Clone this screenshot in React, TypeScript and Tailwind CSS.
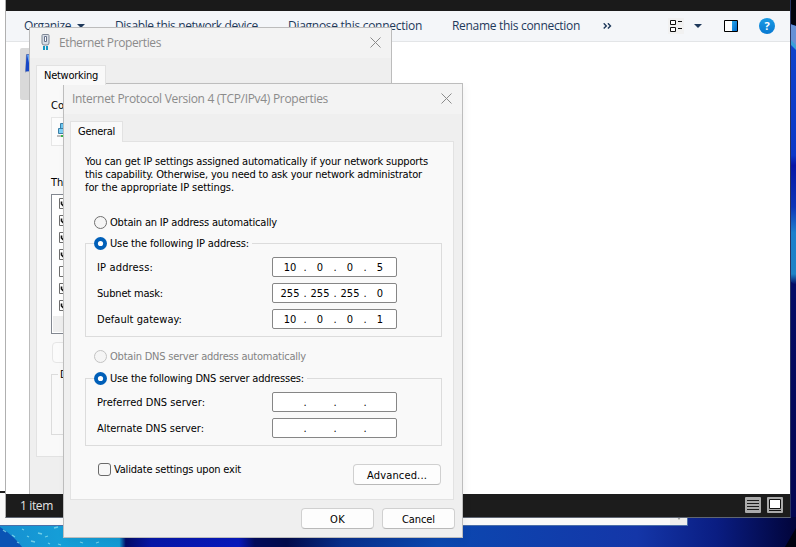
import { useLayoutEffect, useRef } from "react";
import type { ReactNode } from "react";

const tahoma = "font-['DejaVu_Sans_Condensed','DejaVu_Sans',sans-serif] font-stretch-condensed text-[11px] leading-[13px]";
const segoe = "font-['Open_Sans','Noto_Sans',sans-serif] font-stretch-normal text-[12px] leading-[16px]";

/* Text spaced out evenly so that its line has the given width. */
function Fit({ w, children, className = "" }: { w: number; children: string; className?: string }) {
  const ref = useRef<HTMLSpanElement>(null);
  useLayoutEffect(() => {
    const el = ref.current;
    if (!el) return;
    el.style.letterSpacing = "0px";
    const natural = el.getBoundingClientRect().width;
    el.style.letterSpacing = `${(w - natural) / children.length}px`;
  }, [w, children]);
  return (
    <span ref={ref} className={`inline-block shrink-0 whitespace-pre ${className}`}>
      {children}
    </span>
  );
}

function Radio({ checked = false, disabled = false }: { checked?: boolean; disabled?: boolean }) {
  return (
    <svg width="13" height="13" viewBox="0 0 13 13" className="shrink-0 overflow-visible">
      {checked ? (
        <>
          <circle cx="6.5" cy="6.5" r="6.5" fill="#005fb8" />
          <circle cx="6.5" cy="6.5" r="2.6" fill="#fff" />
        </>
      ) : (
        <circle cx="6.5" cy="6.5" r="6" fill="#f5f5f5" stroke={disabled ? "#c3c3c3" : "#707070"} />
      )}
    </svg>
  );
}

function RadioRow({ text, w, checked, disabled }: { text: string; w: number; checked?: boolean; disabled?: boolean }) {
  return (
    <div className={`flex h-[13px] items-center gap-[3px] ${disabled ? "text-[#838383]" : ""}`}>
      <Radio checked={checked} disabled={disabled} />
      <Fit w={w}>{text}</Fit>
    </div>
  );
}

function AddressField({ parts }: { parts: string[] }) {
  return (
    <div className="flex h-5 w-[125px] items-center rounded-[2px] border border-[#868686] bg-white pl-1">
      {parts.map((p, i) => (
        <div key={i} className="flex">
          <span className="w-[26px] text-center">{p}</span>
          {i < 3 && <span className="flex w-1 justify-center">.</span>}
        </div>
      ))}
    </div>
  );
}

function AddressRow({ label, w, parts }: { label: string; w: number; parts: string[] }) {
  return (
    <div className="flex h-5 items-center pl-[11px]">
      <div className="w-[175px]">
        <Fit w={w}>{label}</Fit>
      </div>
      <AddressField parts={parts} />
    </div>
  );
}

function Group({ text, w, className, children }: { text: string; w: number; className: string; children: ReactNode }) {
  return (
    <fieldset className={`w-[357px] border border-[#dcdcdc] ${className}`}>
      <legend className="ml-2 pr-[3px]">
        <RadioRow text={text} w={w} checked />
      </legend>
      <div className="flex flex-col gap-1.5 pt-[7px]">{children}</div>
    </fieldset>
  );
}

function PushButton({ text, w, className }: { text: string; w: number; className: string }) {
  return (
    <button className={`flex h-[21px] items-center justify-center rounded-[4px] border border-[#d0d0d0] border-b-[#b9b9b9] bg-[#fdfdfd] pt-[2px] ${className}`}>
      <Fit w={w}>{text}</Fit>
    </button>
  );
}

function Close() {
  return (
    <svg width="11" height="11" viewBox="0 0 11 11" className="mb-px shrink-0">
      <path d="M.5.5l10 10M10.500.5l-10 10" stroke="#8b8b8b" />
    </svg>
  );
}

function Wallpaper() {
  return (
    <svg width="796" height="547" className="absolute left-0 top-0">
      <defs>
        <linearGradient id="floor">
          <stop offset="0" stopColor="#168fd0" />
          <stop offset=".08" stopColor="#159fd8" />
          <stop offset=".15" stopColor="#129ad4" />
          <stop offset=".158" stopColor="#030b68" />
          <stop offset=".19" stopColor="#0717a8" />
          <stop offset=".3" stopColor="#0819bd" />
          <stop offset=".32" stopColor="#030c5c" />
          <stop offset=".36" stopColor="#030c4c" />
          <stop offset=".43" stopColor="#082f8c" />
          <stop offset=".55" stopColor="#0b48b0" />
          <stop offset=".8" stopColor="#1436a8" />
          <stop offset=".9" stopColor="#0a1d82" />
          <stop offset="1" stopColor="#01043a" />
        </linearGradient>
        <linearGradient id="side" x1="0" y1="0" x2="0" y2="1">
          <stop offset="0" stopColor="#1148cc" />
          <stop offset=".3" stopColor="#0b38c8" />
          <stop offset=".32" stopColor="#0716a6" />
          <stop offset=".4" stopColor="#0c35b8" />
          <stop offset=".45" stopColor="#1d7fcc" />
          <stop offset=".53" stopColor="#1c83c6" />
          <stop offset=".55" stopColor="#040c66" />
          <stop offset="1" stopColor="#020650" />
        </linearGradient>
      </defs>
      <rect width="796" height="547" fill="url(#floor)" />
      <rect x="790" width="6" height="517" fill="url(#side)" />
      <path d="M790 0h6v26l-6-2z" fill="#01030c" />
      <path d="M790 24l6 2v20l-6-6z" fill="#6590d6" />
      <path d="M790 39l6 6v5l-6-6z" fill="#3aa0d8" />
      <path d="M790 281l6 5v12h-6z" fill="#040c66" />
      <path d="M0 527q14 9 22 20H0z" fill="#0a53b4" />
      <path d="M796 528v19h-11z" fill="#00010f" />
      <g stroke="#8fe0ee" strokeWidth="1.3" opacity=".75">
        <path d="M3 530l3 2M12 535l3 2M22 529l2 1M31 541l4 1M38 533l4 1M45 537l3-1M54 528l4-1M58 544l3 1M27 536l2 1M17 542l2 1M48 543l2 1M80 542l3 1M96 543l3-1" />
      </g>
    </svg>
  );
}

function ExplorerWindow() {
  return (
    <div className="absolute left-[5px] top-0 flex h-[518px] w-[786px] flex-col border-b border-l border-r border-b-[#5f6673] border-l-[#b0b0b0] border-r-[#2a3560] bg-white text-[#1e395b]">
      <div className="h-[11px] bg-[#1a1a1a]" />
      <div className={`flex h-[31px] items-center border-b border-[#e3e5e7] bg-[#f4f6f9] pl-[18px] ${segoe}`}>
        <Fit w={47}>Organize</Fit>
        <svg width="8" height="4" className="ml-[6px]"><path d="M0 0h8L4 4z" fill="#1e395b" /></svg>
        <Fit w={143} className="ml-[30px]">Disable this network device</Fit>
        <Fit w={134} className="ml-[30px]">Diagnose this connection</Fit>
        <Fit w={128} className="ml-[30px]">Rename this connection</Fit>
        <svg width="9" height="6" className="ml-[23px]" fill="none" stroke="#1e395b" strokeWidth="1.4">
          <path d="M.7.3l2.6 2.6L.7 5.5M4.9.3l2.6 2.6-2.6 2.6" />
        </svg>
        <svg width="16" height="16" className="ml-[56px]">
          <rect width="16" height="16" fill="#f1f1f1" />
          <g fill="#fff" stroke="#111"><path d="M2.500 2.500h5v4h-5zM2.500 9.500h5v4h-5z" /><path d="M10 3.500h4M10 10.500h4" /></g>
        </svg>
        <svg width="8" height="4" className="ml-[10px]"><path d="M0 0h8L4 4z" fill="#1e395b" /></svg>
        <svg width="14" height="12" className="ml-[22px]">
          <defs><linearGradient id="pane" x2="1" y2="1"><stop stopColor="#28a8ea" /><stop offset="1" stopColor="#0067c8" /></linearGradient></defs>
          <path d="M.5.5h13v11H.5z" fill="#fff" stroke="#000" />
          <path d="M8 1h5v10H8z" fill="url(#pane)" />
        </svg>
        <div className="ml-[21px] flex size-4 items-center justify-center rounded-full bg-linear-to-b from-[#1a9be4] to-[#0878d1] font-['Open_Sans',sans-serif] text-[11px] font-bold leading-4 text-white">?</div>
      </div>
      <div className="flex flex-1 pl-[14px] pt-[6px]">
        <div className="h-[52px] w-[200px] rounded-[2px] bg-[#d9d9d9] pl-[5px] pt-[5px]">
          <svg width="22" height="22">
            <path d="M1 1h20v15H4L0 20z" fill="#a0a6b0" />
            <path d="M1.500 1.500h19v16l-20 1z" fill="#1646c6" />
            <path d="M2 2h2v8z" fill="#68a6f4" />
          </svg>
        </div>
      </div>
      <div className={`flex h-[23px] items-center justify-between bg-[#1c1c1c] pl-[14px] pr-[7px] text-[#e4e4e4] ${segoe}`}>
        <Fit w={33}>1 item</Fit>
        <div className="flex gap-[6px] pb-px">
          <svg width="16" height="16">
            <rect width="16" height="16" rx="1" fill="#ababab" />
            <path d="M2 3.500h12M2 6.500h12M2 9.500h12M2 12.500h12" stroke="#1c1c1c" />
          </svg>
          <svg width="16" height="16">
            <rect width="16" height="16" rx="1" fill="#ababab" />
            <path d="M2.500 2.500h11v9h-11z" fill="#fff" stroke="#111" />
            <path d="M2 13.500h12" stroke="#111" />
          </svg>
        </div>
      </div>
    </div>
  );
}

function ListRow({ checked }: { checked: boolean }) {
  return (
    <div className="flex h-[17px] items-center pl-[7px]">
      <svg width="11" height="11">
        <path d="M.5.5h10v10H.5z" fill="#fff" stroke="#6e6e6e" />
        {checked && <path d="M2.500 3.500v2.500l2.500 2.500 4-5.500" fill="none" stroke="#111" strokeWidth="1.6" />}
      </svg>
    </div>
  );
}

function EthernetWindow() {
  const checks = [true, true, true, true, false, true, true];
  return (
    <div className={`absolute left-[29px] top-[27px] flex h-[467px] w-[363px] flex-col border border-b-0 border-[#bcbcbc] bg-[#efefef] text-black ${tahoma}`}>
      <div className={`flex h-[30px] items-center bg-[#f3f3f3] pl-[11px] pr-[10px] text-[#8b8b8b] ${segoe}`}>
        <svg width="10" height="16" className="mb-[2px] mr-[8px]">
          <path d="M1 1.500q0-1 1-1h5q1 0 1 1V9q0 2-2 2H3Q1 11 1 9z" fill="#d7dce5" stroke="#7f8896" />
          <path d="M3.500 2.500h2v5h-2z" fill="#fff" stroke="#66728a" />
          <path d="M2 12h2v4H2zM5 12h2v4H5z" fill="#1697c4" />
        </svg>
        <Fit w={102}>Ethernet Properties</Fit>
        <div className="ml-auto"><Close /></div>
      </div>
      <div className="mt-[7px] flex flex-col pl-[6px]">
        <div className="z-10 -mb-px flex h-[20px] w-[70px] justify-center border border-b-0 border-[#e2e2e2] bg-[#f9f9f9] pt-[3px]">
          <Fit w={54}>Networking</Fit>
        </div>
        <div className="flex h-[373px] w-[349px] flex-col border border-[#e2e2e2] bg-[#f9f9f9] pl-[14px] pt-[14px]">
          <span className="self-start">Co</span>
          <div className="mt-[5px] flex h-[29px] w-[320px] items-center border border-[#e6e6e6] bg-[#fcfcfc] pb-[4px] pl-[5px]">
            <svg width="16" height="16">
              <path d="M3.500 1.500h11v7h-11z" fill="#6cc8f2" stroke="#3c7fa6" />
              <path d="M1.500 6.500h9v5h-9z" fill="#7fd0f5" stroke="#3c7fa6" />
              <path d="M0 13h14v2H0z" fill="#bcbcbc" /><path d="M4 13h5v2H4z" fill="#3cb44a" />
            </svg>
          </div>
          <span className="mt-[30px] self-start">Th</span>
          <div className="mt-[5px] h-[140px] w-[320px] border border-[#828790] bg-white">
            <div className="flex flex-col">
              {checks.map((c, i) => <ListRow key={i} checked={c} />)}
            </div>
            <div className="ml-px mt-[2px] h-[16px] bg-[#eeeeee]" />
          </div>
          <div className="ml-px mt-[8px] h-[21px] w-[90px] rounded-[4px] border border-[#e6e6e6] bg-[#fbfbfb]" />
          <fieldset className="mt-[5px] h-[67px] w-[320px] border border-[#dcdcdc]">
            <legend className="ml-[6px] px-[2px]">D</legend>
          </fieldset>
        </div>
      </div>
    </div>
  );
}

function Ipv4Dialog() {
  return (
    <div className={`absolute left-[63px] top-[83px] flex h-[455px] w-[400px] flex-col border border-[#bdbdbd] bg-[#efefef] text-black shadow-[2px_3px_8px_rgba(0,0,0,0.05)] ${tahoma}`}>
      <div className={`flex h-[30px] items-center justify-between bg-[#f3f3f3] pl-[8px] pr-[10px] text-[#8b8b8b] ${segoe}`}>
        <Fit w={256}>Internet Protocol Version 4 (TCP/IPv4) Properties</Fit>
        <Close />
      </div>
      <div className="mt-[7px] flex flex-col pl-[6px]">
        <div className="z-10 -mb-px flex h-[21px] w-[53px] justify-center border border-b-0 border-[#e2e2e2] bg-[#f9f9f9] pt-[3px]">
          <Fit w={37}>General</Fit>
        </div>
        <div className="flex h-[359px] w-[384px] flex-col border border-[#e2e2e2] bg-[#f9f9f9] pl-[14px] pt-[13px]">
          <Fit w={343} className="self-start">You can get IP settings assigned automatically if your network supports</Fit>
          <Fit w={337} className="self-start">this capability. Otherwise, you need to ask your network administrator</Fit>
          <Fit w={149} className="self-start">for the appropriate IP settings.</Fit>
          <div className="mt-[22px] pl-[9px]">
            <RadioRow text="Obtain an IP address automatically" w={167} />
          </div>
          <Group text="Use the following IP address:" w={139} className="mt-2 h-[100px]">
            <AddressRow label="IP address:" w={56} parts={["10", "0", "0", "5"]} />
            <AddressRow label="Subnet mask:" w={66} parts={["255", "255", "255", "0"]} />
            <AddressRow label="Default gateway:" w={85} parts={["10", "0", "0", "1"]} />
          </Group>
          <div className="mt-[13px] pl-[9px]">
            <RadioRow text="Obtain DNS server address automatically" w={196} disabled />
          </div>
          <Group text="Use the following DNS server addresses:" w={194} className="mt-[9px] h-[74px]">
            <AddressRow label="Preferred DNS server:" w={108} parts={["", "", "", ""]} />
            <AddressRow label="Alternate DNS server:" w={107} parts={["", "", "", ""]} />
          </Group>
          <div className="mt-[17px] flex w-[356px] items-start justify-between pl-[13px]">
            <div className="flex items-center gap-[3px]">
              <div className="size-[13px] rounded-[3px] border border-[#6a6a6a] bg-[#f7f7f7]" />
              <Fit w={127}>Validate settings upon exit</Fit>
            </div>
            <PushButton text="Advanced..." w={60} className="mt-px w-[88px]" />
          </div>
        </div>
      </div>
      <div className="mt-[8px] flex justify-end gap-2 pr-[7px]">
        <PushButton text="OK" w={15} className="w-[73px]" />
        <PushButton text="Cancel" w={33} className="w-[73px]" />
      </div>
    </div>
  );
}

export default function App() {
  return (
    <div className="relative h-[547px] w-[796px] overflow-hidden bg-[#030b5c]">
      <Wallpaper />
      <div className="absolute left-0 top-0 flex h-[526px] w-[688px] flex-col border-b border-r border-[#4a6ea8] bg-white">
        <div className="mt-auto h-[2px] bg-[#1c1c1c]" />
        <div className="flex h-[32px] justify-end bg-[#f9f9f9]">
          <div className="flex w-[17px] items-end justify-center bg-[#ededed] pb-[5px]">
            <svg width="4" height="3"><path d="M0 0h4L2 3z" fill="#9a9a9a" /></svg>
          </div>
        </div>
      </div>
      <ExplorerWindow />
      <EthernetWindow />
      <Ipv4Dialog />
    </div>
  );
}
